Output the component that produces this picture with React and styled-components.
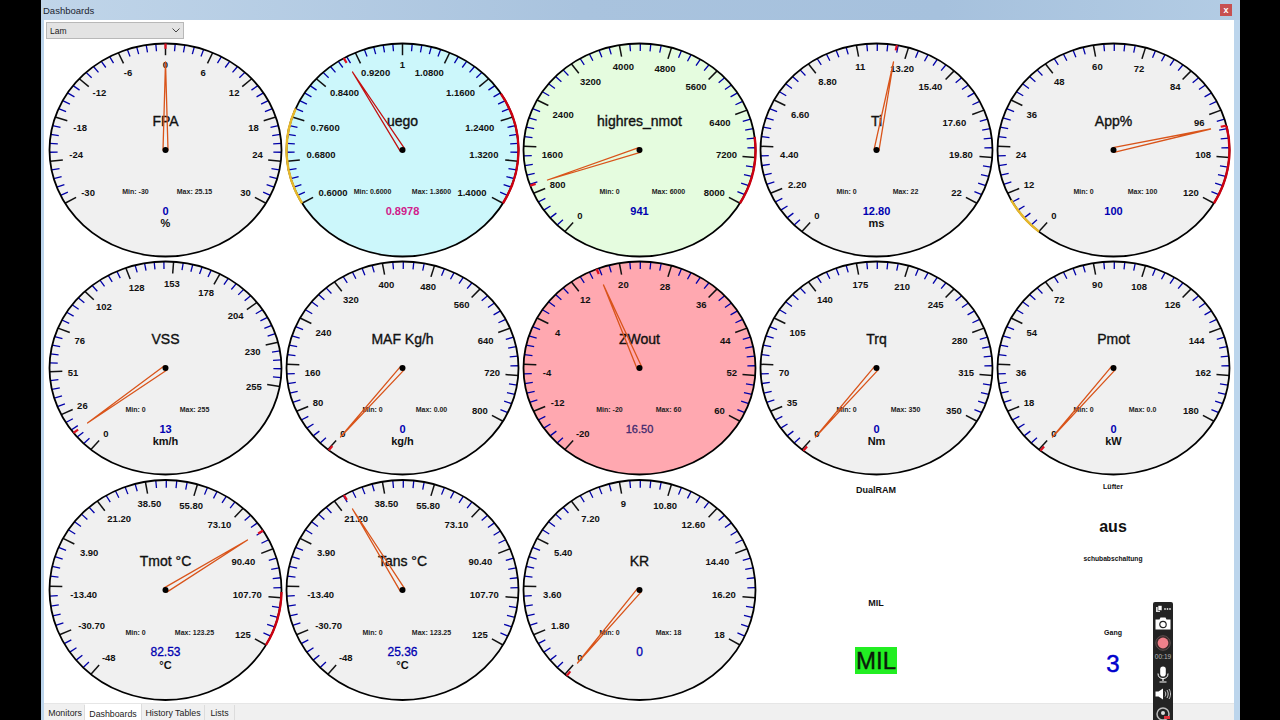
import React from 'react'
import styled, { createGlobalStyle } from 'styled-components'

const GlobalStyle = createGlobalStyle`
  html, body {
    margin: 0;
    padding: 0;
    background: #000;
    font-family: 'Liberation Sans', Arial, sans-serif;
  }
`

const Page = styled.div`
  position: relative;
  width: 1280px;
  height: 720px;
  overflow: hidden;
  background: #000;
  padding: 0 40px 0 41px;
  box-sizing: border-box;
`

const Window = styled.div`
  display: flex;
  flex-direction: column;
  height: 100%;
  background: #bcd5ec;
`

const TitleBar = styled.div`
  display: flex;
  align-items: center;
  justify-content: space-between;
  height: 20px;
  flex: none;
  padding: 0 8px 0 2px;
  background: linear-gradient(90deg, #c0d5e9 0%, #a9c3de 45%, #a6c1dd 75%, #b3cce4 100%);
  color: #1c2530;
  font-size: 9.5px;
`

const CloseButton = styled.div`
  display: flex;
  align-items: center;
  justify-content: center;
  width: 12px;
  height: 12px;
  background: #c75050;
  color: #fff;
  font-size: 9px;
  font-weight: 700;
  line-height: 1;
`

const Content = styled.div`
  display: flex;
  flex-direction: column;
  flex: 1;
  margin: 0 6px 0 3px;
  background: #fff;
  min-height: 0;
`

const TopRow = styled.div`
  flex: none;
  height: 21px;
  padding: 2px 0 0 2px;
  box-sizing: border-box;
`

const Select = styled.div`
  display: flex;
  align-items: center;
  justify-content: space-between;
  width: 138px;
  height: 17px;
  padding: 0 3px 0 3px;
  box-sizing: border-box;
  background: #e3e3e3;
  border: 1px solid #b8b8b8;
  color: #222;
  font-size: 8.5px;
`

const GaugeGrid = styled.div`
  display: grid;
  grid-template-columns: repeat(5, 237px);
  grid-template-rows: 218px 218px 226px;
  flex: none;
  padding-left: 2.5px;
`

const GaugeSvg = styled.svg`
  display: block;
  width: 237px;
  height: 100%;
`

const TickLabel = styled.text`
  font-family: 'Liberation Sans', Arial, sans-serif;
  font-size: 9.5px;
  font-weight: 700;
  fill: #111;
  text-anchor: middle;
  dominant-baseline: central;
`

const GaugeTitle = styled.text`
  font-family: 'Liberation Sans', Arial, sans-serif;
  font-size: 14px;
  fill: #111;
  stroke: #111;
  stroke-width: 0.35px;
  text-anchor: middle;
  dominant-baseline: central;
`

const MinMax = styled.text`
  font-family: 'Liberation Sans', Arial, sans-serif;
  font-size: 7px;
  font-weight: 700;
  fill: #222;
  text-anchor: middle;
  dominant-baseline: central;
`

const GaugeValue = styled.text`
  font-family: 'Liberation Sans', Arial, sans-serif;
  font-size: ${p => p.$size}px;
  font-weight: ${p => (p.$light ? 400 : 700)};
  fill: ${p => p.$color};
  stroke: ${p => (p.$light ? p.$color : 'none')};
  stroke-width: 0.3px;
  text-anchor: middle;
  dominant-baseline: central;
`

const GaugeUnit = styled.text`
  font-family: 'Liberation Sans', Arial, sans-serif;
  font-size: 11px;
  font-weight: 700;
  fill: #111;
  text-anchor: middle;
  dominant-baseline: central;
`

const StatusColumn = styled.div`
  display: flex;
  flex-direction: column;
  align-items: center;
`

const StatusLabel = styled.div`
  height: 10px;
  line-height: 10px;
  margin-top: ${p => p.$top}px;
  font-size: ${p => p.$size}px;
  font-weight: 700;
  color: #111;
`

const StatusText = styled.div`
  height: 20px;
  line-height: 20px;
  margin-top: ${p => p.$top}px;
  font-size: 16px;
  font-weight: 700;
  color: #111;
`

const MilBox = styled.div`
  display: flex;
  align-items: center;
  justify-content: center;
  width: 42px;
  height: 27px;
  margin-top: ${p => p.$top}px;
  background: #22ee22;
  color: #0a1a0a;
  font-size: 24px;
  -webkit-text-stroke: 0.4px #0a1a0a;
`

const GearValue = styled.div`
  height: 28px;
  line-height: 28px;
  margin-top: ${p => p.$top}px;
  font-size: 24px;
  color: #0000cc;
  -webkit-text-stroke: 0.5px #0000cc;
`

const TabStrip = styled.div`
  display: flex;
  flex: 1;
  align-items: flex-end;
  padding-left: 2px;
  background: #f0f0f0;
  border-top: 1px solid #e6e6e6;
`

const Tab = styled.div`
  display: flex;
  align-items: center;
  justify-content: center;
  width: ${p => p.$width}px;
  height: ${p => (p.$active ? 17 : 16)}px;
  box-sizing: border-box;
  background: ${p => (p.$active ? '#fff' : '#f0f0f0')};
  border-right: 1px solid #dcdcdc;
  color: #222;
  font-size: 8.8px;
  padding-top: ${p => (p.$active ? 3 : 0)}px;
  padding-bottom: ${p => (p.$active ? 0 : 1)}px;
`

const Recorder = styled.div`
  position: absolute;
  left: 1153px;
  top: 602px;
  display: flex;
  flex-direction: column;
  align-items: center;
  width: 20px;
  height: 130px;
  border-radius: 2px;
  background: #232323;
`

const RecorderTime = styled.div`
  height: 8px;
  line-height: 8px;
  margin-top: 2px;
  color: #b8b8b8;
  font-size: 6.5px;
`

const RecorderIcon = styled.svg`
  display: block;
  flex: none;
  margin-top: ${p => p.$top}px;
`

const CX = 118.5
const RX = 116

const gauges = [
  { title: 'FPA', labels: ['-30', '-24', '-18', '-12', '-6', '0', '6', '12', '18', '24', '30'], start: -120, tip: [0, -88], min: '-30', max: '25.15', value: '0', unit: '%' },
  { title: 'uego', labels: ['0.6000', '0.6800', '0.7600', '0.8400', '0.9200', '1', '1.0800', '1.1600', '1.2400', '1.3200', '1.4000'], start: -120, tip: [-50, -78], min: '0.6000', max: '1.3600', value: '0.8978', fill: '#ccf7fb', valueColor: '#d0208a', needle: '#c41010', zones: [['#e8b82a', -120, -67], ['#cc0010', 58, 120]] },
  { title: 'highres_nmot', labels: ['0', '800', '1600', '2400', '3200', '4000', '4800', '5600', '6400', '7200', '8000'], start: -140, tip: [-92, 30], min: '0', max: '6000', value: '941', fill: '#e5fcdf', zones: [['#cc0010', 83, 120]] },
  { title: 'Ti', labels: ['0', '2.20', '4.40', '6.60', '8.80', '11', '13.20', '15.40', '17.60', '19.80', '22'], start: -140, tip: [17, -88], min: '0', max: '22', value: '12.80', unit: 'ms' },
  { title: 'App%', labels: ['0', '12', '24', '36', '48', '60', '72', '84', '96', '108', '120'], start: -140, tip: [97, -21], min: '0', max: '100', value: '100', zones: [['#e8b82a', -140, -118], ['#cc0010', 77, 120]] },
  { title: 'VSS', labels: ['0', '26', '51', '76', '102', '128', '153', '178', '204', '230', '255'], start: -140, step: 24, tip: [-78, 55], min: '0', max: '255', value: '13', unit: 'km/h' },
  { title: 'MAF Kg/h', labels: ['0', '80', '160', '240', '320', '400', '480', '560', '640', '720', '800'], start: -140, tip: [-62, 69], min: '0', max: '0.00', value: '0', unit: 'kg/h' },
  { title: 'ZWout', labels: ['-20', '-12', '-4', '4', '12', '20', '28', '36', '44', '52', '60'], start: -140, tip: [-36, -83], min: '-20', max: '60', value: '16.50', fill: '#ffa8b0', valueColor: '#40286e', lightValue: true },
  { title: 'Trq', labels: ['0', '35', '70', '105', '140', '175', '210', '245', '280', '315', '350'], start: -140, tip: [-61, 69], min: '0', max: '350', value: '0', unit: 'Nm' },
  { title: 'Pmot', labels: ['0', '18', '36', '54', '72', '90', '108', '126', '144', '162', '180'], start: -140, tip: [-61, 69], min: '0', max: '0.0', value: '0', unit: 'kW' },
  { title: 'Tmot °C', labels: ['-48', '-30.70', '-13.40', '3.90', '21.20', '38.50', '55.80', '73.10', '90.40', '107.70', '125'], start: -140, tip: [82, -50], min: '0', max: '123.25', value: '82.53', unit: '°C', ry: 110, lightValue: true, zones: [['#cc0010', 91, 120]] },
  { title: 'Tans °C', labels: ['-48', '-30.70', '-13.40', '3.90', '21.20', '38.50', '55.80', '73.10', '90.40', '107.70', '125'], start: -140, tip: [-50, -81], min: '0', max: '123.25', value: '25.36', unit: '°C', ry: 110, lightValue: true },
  { title: 'KR', labels: ['0', '1.80', '3.60', '5.40', '7.20', '9', '10.80', '12.60', '14.40', '16.20', '18'], start: -140, tip: [-62, 73], min: '0', max: '18', value: '0', ry: 110, lightValue: true },
]

const Gauge = ({ title, labels, start, step = 26, tip, min, max, value, unit, fill = '#f0f0f0', valueColor = '#0000b0', lightValue, needle = '#d9541a', zones = [], ry = 106.5 }) => {
  const height = ry > 107 ? 226 : 218
  const cy = ry > 107 ? 113 : 109
  const stepAngle = start === -120 ? 24 : step
  const at = (deg, k) => {
    const a = (deg * Math.PI) / 180
    return [CX + RX * k * Math.sin(a), cy - ry * k * Math.cos(a)]
  }
  const seg = (deg, k1, k2) => {
    const [x1, y1] = at(deg, k1)
    const [x2, y2] = at(deg, k2)
    return { x1, y1, x2, y2 }
  }
  const ticks = []
  for (let i = 0; i <= 50; i++) {
    ticks.push({ deg: start + (i * stepAngle) / 5, major: i % 5 === 0 })
  }
  const peak = (Math.atan2(tip[0] / RX, -tip[1] / ry) * 180) / Math.PI
  const arc = (from, to) => {
    const [x1, y1] = at(from, 1)
    const [x2, y2] = at(to, 1)
    return `M${x1} ${y1}A${RX} ${ry} 0 ${to - from > 180 ? 1 : 0} 1 ${x2} ${y2}`
  }
  // base of the needle, square to its direction
  const len = Math.hypot(tip[0], tip[1])
  const nx = (-tip[1] / len) * 2.5
  const ny = (tip[0] / len) * 2.5
  const scale = ry / 106.5

  return (
    <GaugeSvg viewBox={`0 0 237 ${height}`}>
      <ellipse cx={CX} cy={cy} rx={RX} ry={ry} fill={fill} />
      {ticks.map(t => (
        <line
          key={t.deg}
          {...seg(t.deg, 1, t.major ? 0.89 : 0.93)}
          stroke={t.major ? '#111' : '#0000a8'}
          strokeWidth={t.major ? 1.5 : 1.3}
        />
      ))}
      <ellipse cx={CX} cy={cy} rx={RX} ry={ry} fill="none" stroke="#000" strokeWidth="1.8" />
      {zones.map(([color, from, to]) => (
        <path key={from} d={arc(from, to)} fill="none" stroke={color} strokeWidth="2.4" />
      ))}
      <line {...seg(peak, 1, 0.95)} stroke="#e01020" strokeWidth="2.2" />
      {labels.map((text, i) => {
        const deg = start + i * stepAngle
        const [x, y] = at(deg, 0.8)
        const s = Math.sin((deg * Math.PI) / 180)
        const inset = Math.abs(s) >= 0.3 ? Math.max(0, text.length * 2.65 - 5) * Math.sign(s) : 0
        // labels next to the horizontal sit a few px off the ellipse
        const off = y - cy
        let ly = y
        if (Math.abs(deg) > 55 && Math.abs(deg) < 105) {
          ly = off > -10 && off < 10 ? cy + 4 : y + 4
        }
        return (
          <TickLabel key={text} x={x - inset} y={ly}>
            {text}
          </TickLabel>
        )
      })}
      <GaugeTitle x={CX} y={cy - 29}>{title}</GaugeTitle>
      <MinMax x={CX - 30} y={cy + 41 * scale}>Min: {min}</MinMax>
      <MinMax x={CX + 29} y={cy + 41 * scale}>Max: {max}</MinMax>
      <GaugeValue x={CX} y={cy + 60.5 * scale} $size={ry > 107 ? 12 : 11} $color={valueColor} $light={lightValue}>{value}</GaugeValue>
      {unit && <GaugeUnit x={CX} y={cy + 72.5 * scale}>{unit}</GaugeUnit>}
      <polygon
        points={`${CX + nx},${cy + ny} ${CX - nx},${cy - ny} ${CX + tip[0]},${cy + tip[1]}`}
        fill="none"
        stroke={needle}
        strokeWidth="1.3"
        strokeLinejoin="round"
      />
      <circle cx={CX} cy={cy} r="3" fill="#000" />
    </GaugeSvg>
  )
}

const RecorderBar = () => (
  <Recorder>
    <RecorderIcon $top={3} width="16" height="8" viewBox="0 0 16 8">
      <rect x="1" y="2" width="4" height="5" fill="#ddd" />
      <rect x="3" y="0.5" width="4" height="5" fill="#fff" stroke="#232323" strokeWidth="0.6" />
      <circle cx="10" cy="4" r="0.9" fill="#ddd" />
      <circle cx="12.5" cy="4" r="0.9" fill="#ddd" />
      <circle cx="15" cy="4" r="0.9" fill="#ddd" />
    </RecorderIcon>
    <RecorderIcon $top={4} width="16" height="13" viewBox="0 0 16 13">
      <path d="M0.5 2.5H4.5L5.5 0.5H10.5L11.5 2.5H15.5V12.5H0.5Z" fill="#fff" />
      <circle cx="8" cy="7.5" r="3.2" fill="#fff" stroke="#232323" strokeWidth="1.2" />
    </RecorderIcon>
    <RecorderIcon $top={5} width="16" height="16" viewBox="0 0 16 16">
      <circle cx="8" cy="8" r="7.3" fill="#3a2a2a" stroke="#6a5a5a" strokeWidth="0.8" />
      <circle cx="8" cy="8" r="5.4" fill="#f0808a" />
    </RecorderIcon>
    <RecorderTime>00:19</RecorderTime>
    <RecorderIcon $top={5} width="12" height="17" viewBox="0 0 12 17">
      <rect x="3.2" y="0.5" width="5.6" height="10" rx="2.8" fill="#fff" />
      <path d="M1 7.5C1 11 3 12.5 6 12.5S11 11 11 7.5" fill="none" stroke="#fff" strokeWidth="1" />
      <path d="M6 12.5V15M2.5 16H9.5" fill="none" stroke="#fff" strokeWidth="1.2" />
    </RecorderIcon>
    <RecorderIcon $top={5} width="16" height="12" viewBox="0 0 16 12">
      <path d="M0.5 3.5H3.5L8 0.5V11.5L3.5 8.5H0.5Z" fill="#fff" />
      <path d="M10 3.5C11 5 11 7 10 8.5M12 2C13.6 4.5 13.6 7.5 12 10M14 1C16 4 16 8 14 11" fill="none" stroke="#ddd" strokeWidth="0.9" />
    </RecorderIcon>
    <RecorderIcon $top={7} width="14" height="14" viewBox="0 0 14 14">
      <circle cx="7" cy="7" r="6" fill="none" stroke="#bbb" strokeWidth="1.5" />
      <circle cx="7" cy="6" r="2" fill="#ddd" />
      <rect x="8" y="9" width="6" height="3" fill="#e0303a" />
    </RecorderIcon>
  </Recorder>
)

const App = () => (
  <Page>
    <GlobalStyle />
    <Window>
      <TitleBar>
        <span>Dashboards</span>
        <CloseButton>x</CloseButton>
      </TitleBar>
      <Content>
        <TopRow>
          <Select>
            <span>Lam</span>
            <svg width="8" height="5" viewBox="0 0 8 5">
              <path d="M0.5 0.5L4 4L7.5 0.5" fill="none" stroke="#444" strokeWidth="1" />
            </svg>
          </Select>
        </TopRow>
        <GaugeGrid>
          {gauges.map(g => (
            <Gauge key={g.title} {...g} />
          ))}
          <StatusColumn>
            <StatusLabel $top={8} $size={9}>DualRAM</StatusLabel>
            <StatusLabel $top={103} $size={9}>MIL</StatusLabel>
            <MilBox $top={39}>MIL</MilBox>
          </StatusColumn>
          <StatusColumn>
            <StatusLabel $top={5} $size={7}>Lüfter</StatusLabel>
            <StatusText $top={25}>aus</StatusText>
            <StatusLabel $top={17} $size={6.7}>schubabschaltung</StatusLabel>
            <StatusLabel $top={64} $size={7}>Gang</StatusLabel>
            <GearValue $top={12}>3</GearValue>
          </StatusColumn>
        </GaugeGrid>
        <TabStrip>
          <Tab $width={39}>Monitors</Tab>
          <Tab $width={57} $active>Dashboards</Tab>
          <Tab $width={63}>History Tables</Tab>
          <Tab $width={30}>Lists</Tab>
        </TabStrip>
      </Content>
    </Window>
    <RecorderBar />
  </Page>
)

export default App
